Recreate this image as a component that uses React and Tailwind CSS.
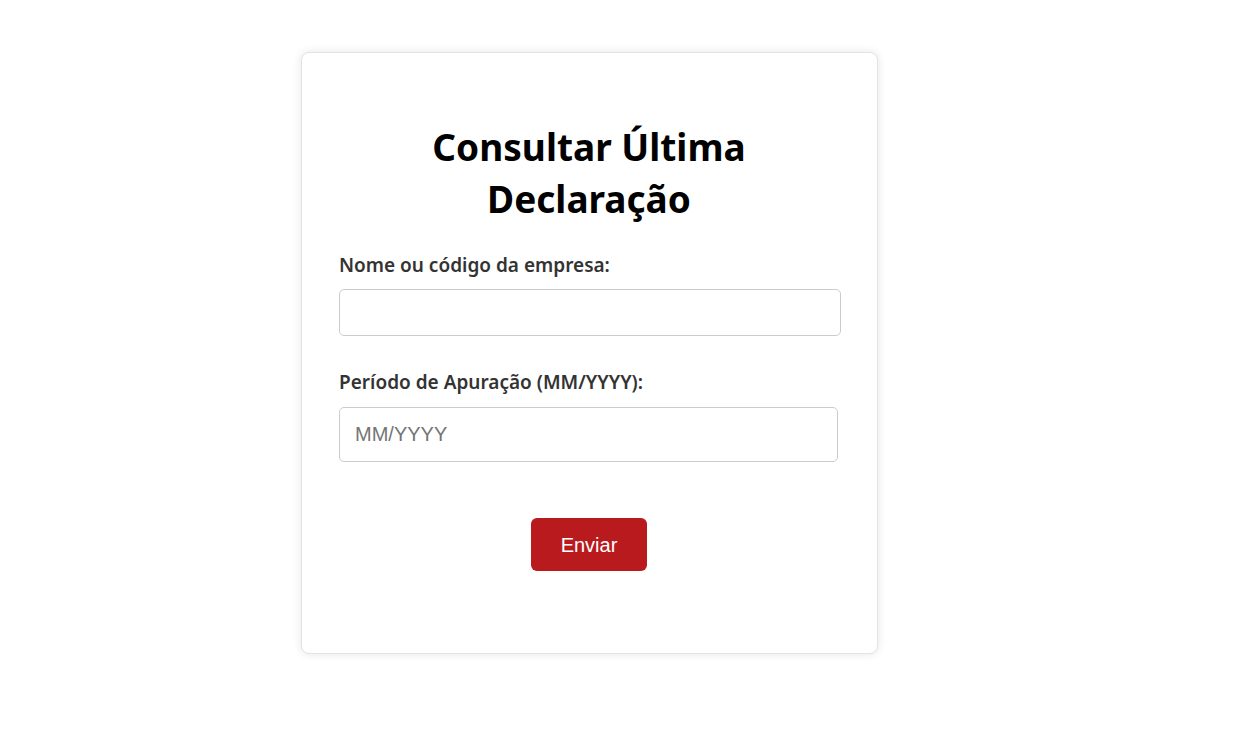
export default function App() {
  return (
    <div className="min-h-screen bg-white">
      <div className="pt-[52px] pl-[301px]">
        <div
          className="w-[577px] h-[602px] rounded-lg border border-[#e3e3e3] bg-white shadow-[0_0_10px_rgba(0,0,0,0.1)] pl-[37px] pr-[38px] pt-[68px]"
          style={{ fontFamily: '"Noto Sans", "Open Sans", sans-serif' }}
        >
          <h1 className="text-center text-[37px] leading-[52px] font-bold text-black">
            Consultar Última
            <br />
            Declaração
          </h1>

          <label className="block mt-[28px] text-[19px] leading-[24px] font-semibold text-[#333]">
            Nome ou código da empresa:
          </label>
          <input
            className="block mt-[12px] w-[502px] h-[47px] rounded-[5px] border border-[#ccc] px-[15px] text-[20px] outline-none"
            style={{ fontFamily: '"Liberation Sans", Arial, sans-serif' }}
          />

          <label className="block mt-[34px] text-[19px] leading-[24px] font-semibold text-[#333]">
            Período de Apuração (MM/YYYY):
          </label>
          <input
            placeholder="MM/YYYY"
            className="block mt-[13px] w-[499px] h-[55px] rounded-[5px] border border-[#ccc] px-[15px] text-[20px] outline-none placeholder:text-[#757575]"
            style={{ fontFamily: '"Liberation Sans", Arial, sans-serif' }}
          />

          <div className="flex justify-center mt-[56px]">
            <button
              className="w-[116px] h-[53px] rounded-[6px] bg-[#b91a1e] text-white text-[20px]"
              style={{ fontFamily: '"Liberation Sans", Arial, sans-serif' }}
            >
              Enviar
            </button>
          </div>
        </div>
      </div>
    </div>
  );
}
